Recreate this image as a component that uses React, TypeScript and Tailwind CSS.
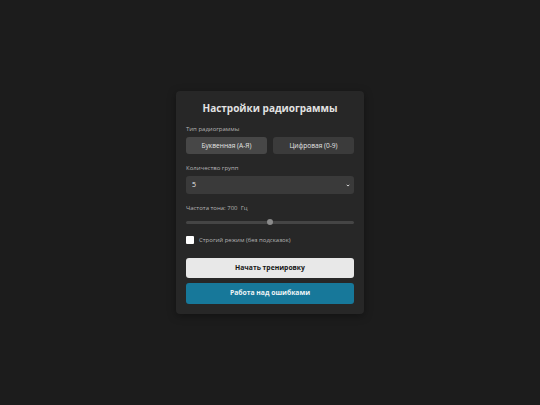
import { useState } from 'react'

const font = { fontFamily: '"Open Sans", "Noto Sans", sans-serif' }

function Label({ children }: { children: React.ReactNode }) {
  return <div className="flex h-[8px] items-center text-[6px] leading-none text-[#b4b4b4]">{children}</div>
}

export default function App() {
  const [mode, setMode] = useState<'letters' | 'digits'>('letters')
  const freq = 700

  return (
    <div className="flex min-h-screen items-center justify-center bg-[#1c1c1c]" style={font}>
      <div className="flex h-[223px] w-[188px] flex-col rounded-[4px] bg-[#272727] px-[10px] pt-[10px] shadow-[0_2px_8px_rgba(0,0,0,0.35)]">
        <h1 className="flex h-[14px] items-center justify-center text-[10px] font-bold leading-none text-[#e2e2e2]">
          Настройки радиограммы
        </h1>

        <div className="mt-[10px]">
          <Label>Тип радиограммы</Label>
        </div>
        <div className="mt-[4px] grid h-[17px] grid-cols-2 gap-[6px]">
          <button
            onClick={() => setMode('letters')}
            className={
              mode === 'letters'
                ? 'rounded-[3px] bg-[#474747] text-[6.6px] text-[#e4e4e4]'
                : 'rounded-[3px] bg-[#3b3b3b] text-[6.6px] text-[#e4e4e4]'
            }
          >
            Буквенная (А-Я)
          </button>
          <button
            onClick={() => setMode('digits')}
            className={
              mode === 'digits'
                ? 'rounded-[3px] bg-[#474747] text-[6.6px] text-[#e4e4e4]'
                : 'rounded-[3px] bg-[#3b3b3b] text-[6.6px] text-[#e4e4e4]'
            }
          >
            Цифровая (0-9)
          </button>
        </div>

        <div className="mt-[10px]">
          <Label>Количество групп</Label>
        </div>
        <div className="mt-[4px] flex h-[18px] items-center justify-between rounded-[3px] bg-[#3a3a3a] pl-[6px] pr-[4px] text-[7px] text-[#e8e8e8]">
          <span>5</span>
          <svg width="4" height="3" viewBox="0 0 10 8" className="text-[#e8e8e8]">
            <path d="M1.5 2 L5 5.5 L8.5 2" fill="none" stroke="currentColor" strokeWidth="2.4" />
          </svg>
        </div>

        <div className="mt-[10px]">
          <Label>
            Частота тона: {freq}&nbsp;&nbsp;Гц
          </Label>
        </div>
        <div className="relative mt-[7px] flex h-[6px] items-center">
          <div className="h-[3px] w-full rounded-full bg-[#454545]" />
          <div className="absolute left-[81px] top-0 h-[6px] w-[6px] rounded-full bg-[#8a8a8a]" />
        </div>

        <div className="mt-[11px] flex h-[8px] items-center gap-[5px]">
          <div className="h-[8px] w-[8px] rounded-[1px] bg-white" />
          <span className="text-[6px] leading-none text-[#b4b4b4]">Строгий режим (без подсказок)</span>
        </div>

        <button className="mt-[14px] h-[20px] rounded-[3px] bg-[#e8e8e8] text-[6.8px] font-bold text-[#151515]">
          Начать тренировку
        </button>
        <button className="mt-[5px] h-[21px] rounded-[3px] bg-[#17789a] text-[6.8px] font-bold text-[#eef4f6]">
          Работа над ошибками
        </button>
      </div>
    </div>
  )
}
